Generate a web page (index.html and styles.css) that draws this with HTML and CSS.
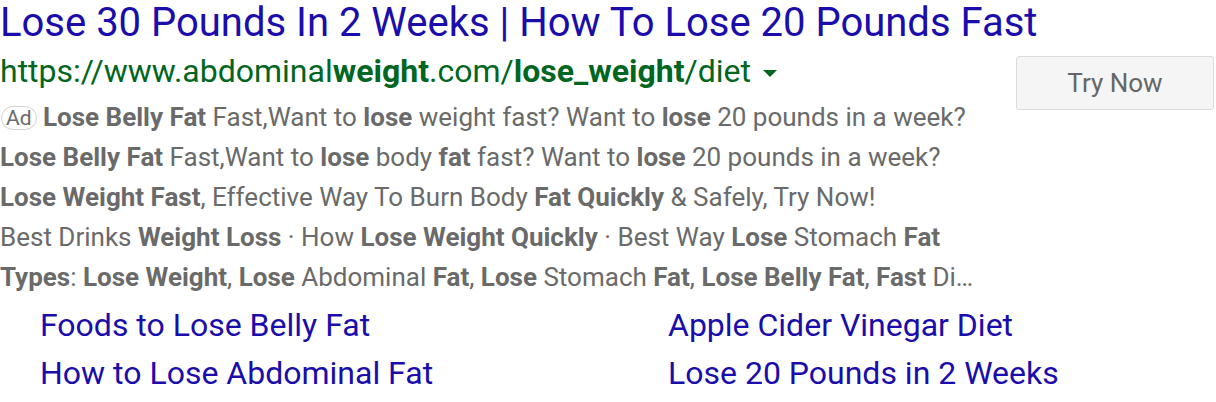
FILE: index.html
```html
<!DOCTYPE html>
<html>
<head>
<meta charset="utf-8">
<link rel="stylesheet" href="styles.css">
</head>
<body>
<div class="ad">
  <div class="title">Lose 30 Pounds In 2 Weeks | How To Lose 20 Pounds Fast</div>
  <div class="main">
    <div class="left">
      <div class="url">https://www.abdominal<b>weight</b>.com/<b>lose_weight</b>/diet<span class="caret"></span></div>
      <div class="desc">
        <div class="line"><span class="badge">Ad</span> <b>Lose Belly Fat</b> Fast,Want to <b>lose</b> weight fast? Want to <b>lose</b> 20 pounds in a week?</div>
        <div class="line"><b>Lose Belly Fat</b> Fast,Want to <b>lose</b> body <b>fat</b> fast? Want to <b>lose</b> 20 pounds in a week?</div>
        <div class="line"><b>Lose Weight Fast</b>, Effective Way To Burn Body <b>Fat Quickly</b> &amp; Safely, Try Now!</div>
        <div class="line">Best Drinks <b>Weight Loss</b> · How <b>Lose Weight Quickly</b> · Best Way <b>Lose</b> Stomach <b>Fat</b></div>
        <div class="line"><b>Types</b>: <b>Lose Weight</b>, <b>Lose</b> Abdominal <b>Fat</b>, <b>Lose</b> Stomach <b>Fat</b>, <b>Lose Belly Fat</b>, <b>Fast</b> Di…</div>
      </div>
    </div>
    <div class="right">
      <div class="btn">Try Now</div>
    </div>
  </div>
  <div class="sitelinks">
    <div class="sl">Foods to Lose Belly Fat</div>
    <div class="sl">Apple Cider Vinegar Diet</div>
    <div class="sl">How to Lose Abdominal Fat</div>
    <div class="sl">Lose 20 Pounds in 2 Weeks</div>
  </div>
</div>
</body>
</html>
```

FILE: styles.css
```css
html, body {
  margin: 0;
  padding: 0;
  background: #fff;
}
body {
  font-family: Roboto, "Noto Sans", Arial, sans-serif;
}
.ad {
  width: 1216px;
}
.title {
  color: #1a0dab;
  font-size: 40px;
  line-height: 46px;
  white-space: nowrap;
}
.main {
  display: flex;
  justify-content: space-between;
}
.left {
  flex: 1;
}
.url {
  color: #006621;
  font-size: 32px;
  line-height: 51px;
  white-space: nowrap;
}
.url b {
  font-weight: 700;
}
.caret {
  display: inline-block;
  width: 0;
  height: 0;
  border-left: 7px solid transparent;
  border-right: 7px solid transparent;
  border-top: 7px solid #006621;
  margin-left: 12px;
  vertical-align: middle;
}
.desc {
  color: #6a6a6a;
  font-size: 26px;
  line-height: 40px;
}
.desc b {
  font-weight: 700;
  color: #6a6a6a;
}
.line {
  white-space: nowrap;
}
.badge {
  display: inline-block;
  border: 1px solid #d0d0d0;
  border-radius: 12px;
  font-size: 21px;
  line-height: 22px;
  padding: 0 4px;
  margin-left: 1px;
  color: #6a6a6a;
  vertical-align: 1px;
}
.right {
  padding-top: 10px;
  padding-right: 2px;
}
.btn {
  width: 198px;
  height: 54px;
  box-sizing: border-box;
  border: 1px solid #dcdcdc;
  border-radius: 3px;
  background: #f5f5f5;
  color: #666;
  font-size: 26px;
  display: flex;
  align-items: center;
  justify-content: center;
}
.sitelinks {
  display: grid;
  grid-template-columns: 628px 1fr;
  padding-left: 40px;
  margin-top: 4px;
}
.sl {
  color: #1a0dab;
  font-size: 32px;
  line-height: 48px;
  white-space: nowrap;
}
```
